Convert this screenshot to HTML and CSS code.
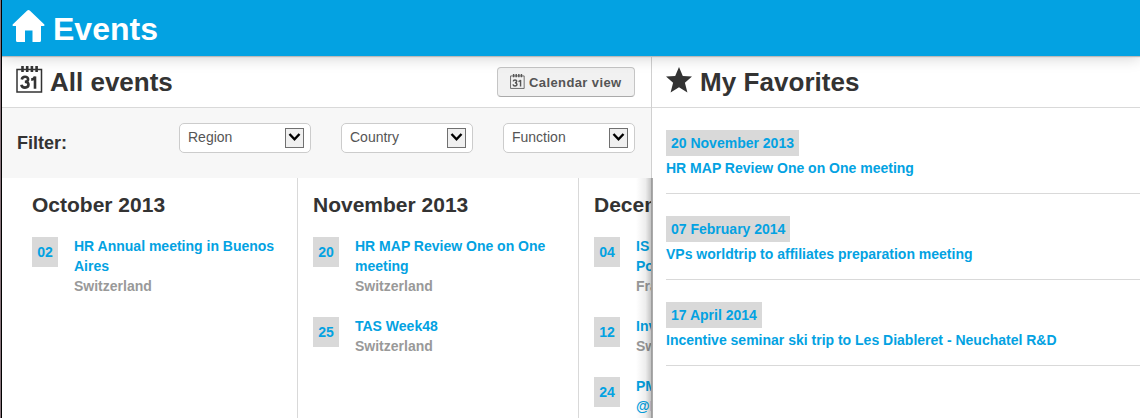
FILE: index.html
```html
<!DOCTYPE html>
<html lang="en">
<head>
<meta charset="utf-8">
<title>Events</title>
<link rel="stylesheet" href="styles.css">
</head>
<body>
<svg class="defs" aria-hidden="true">
  <symbol id="calendar" viewBox="0 0 27 27">
    <path d="M1 3.5H25.5V26H1Z" fill="none" stroke="currentColor" stroke-width="1.5"/>
    <path d="M6.5 0V6M11.2 0V6M15.9 0V6M20.6 0V6" stroke="currentColor" stroke-width="2.6"/>
    <path d="M5.8 13.4C6.2 11.3 7.5 10.8 9 10.8C11 10.8 12.1 11.8 12.1 13.2C12.1 14.8 10.9 15.7 8.9 15.8C11.3 15.9 12.5 17 12.5 18.6C12.5 20.5 11 21.6 9 21.6C7 21.6 5.7 20.6 5.4 18.7M15.2 13.6C17.3 13.4 18.6 12.4 19 10.6V22.7" fill="none" stroke="currentColor" stroke-width="2.6"/>
  </symbol>
  <symbol id="chevron" viewBox="0 0 17 18">
    <path d="M3.5 5L8.5 10.3L13.5 5" fill="none" stroke="#000" stroke-width="2.4"/>
  </symbol>
</svg>
<div class="app">
  <header class="topbar">
    <svg class="home" viewBox="0 0 33 33"><path d="M16.5 0Q17.3 0 18 .7L32.1 14.3Q33.2 16 31.5 16H29V30.5Q29 32 27.5 32H20.5V20.5H13V32H5.5Q4 32 4 30.5V16H1.5Q-.2 16 .9 14.3L15 .7Q15.7 0 16.5 0Z" fill="#fff"/></svg>
    <h1 class="app-title">Events</h1>
  </header>
  <div class="content">
    <main class="events">
      <div class="section-head">
        <svg class="head-icon"><use href="#calendar"/></svg>
        <h2 class="section-title">All events</h2>
        <button class="view-button"><svg class="button-icon"><use href="#calendar"/></svg><span>Calendar view</span></button>
      </div>
      <div class="filters">
        <span class="filter-label">Filter:</span>
        <div class="select"><span>Region</span><svg class="arrow"><use href="#chevron"/></svg></div>
        <div class="select"><span>Country</span><svg class="arrow"><use href="#chevron"/></svg></div>
        <div class="select"><span>Function</span><svg class="arrow"><use href="#chevron"/></svg></div>
      </div>
      <div class="months">
        <section class="month">
          <h3 class="month-title">October 2013</h3>
          <div class="event"><span class="day">02</span><div class="info"><a class="link">HR Annual meeting in Buenos<br>Aires</a><span class="place">Switzerland</span></div></div>
        </section>
        <section class="month">
          <h3 class="month-title">November 2013</h3>
          <div class="event"><span class="day">20</span><div class="info"><a class="link">HR MAP Review One on One<br>meeting</a><span class="place">Switzerland</span></div></div>
          <div class="event"><span class="day">25</span><div class="info"><a class="link">TAS Week48</a><span class="place">Switzerland</span></div></div>
        </section>
        <section class="month">
          <h3 class="month-title">Decem</h3>
          <div class="event"><span class="day">04</span><div class="info"><a class="link">IS<br>Po</a><span class="place">Fra</span></div></div>
          <div class="event"><span class="day">12</span><div class="info"><a class="link">Inv</a><span class="place">Sw</span></div></div>
          <div class="event"><span class="day">24</span><div class="info"><a class="link">PM<br>@I</a></div></div>
        </section>
      </div>
    </main>
    <aside class="favorites">
      <div class="section-head">
        <svg class="star" viewBox="0 0 26 26"><path d="M13 0L16.8 9L26 9.5L18.9 15.7L21.4 25.5L13 20.2L4.6 25.5L7.1 15.7L0 9.5L9.2 9Z" fill="#333"/></svg>
        <h2 class="section-title">My Favorites</h2>
      </div>
      <div class="favorite-list">
        <div class="favorite"><span class="date">20 November 2013</span><a class="link">HR MAP Review One on One meeting</a></div>
        <div class="favorite"><span class="date">07 February 2014</span><a class="link">VPs worldtrip to affiliates preparation meeting</a></div>
        <div class="favorite"><span class="date">17 April 2014</span><a class="link">Incentive seminar ski trip to Les Diableret - Neuchatel R&amp;D</a></div>
      </div>
    </aside>
  </div>
</div>
</body>
</html>
```
FILE: styles.css
```css
* { box-sizing: border-box; }
body {
  margin: 0;
  height: 418px;
  overflow: hidden;
  font-family: "Liberation Sans", Arial, sans-serif;
  font-weight: bold;
  font-size: 14px;
  line-height: 20px;
  color: #333;
  background: #fff;
}
h1, h2, h3 { margin: 0; }
.defs { position: absolute; width: 0; height: 0; }
.app {
  height: 418px;
  display: flex;
  flex-direction: column;
  border-left: 1px solid #88747c;
  box-shadow: inset 1px 0 #000;
  padding-left: 1px;
}
.topbar {
  flex: none;
  height: 56px;
  display: flex;
  align-items: flex-start;
  padding: 10px 0 0 10px;
  background: #03a2e2;
  box-shadow: 0 1px 1px #bbb, 0 2px 14px rgba(0, 0, 0, .18);
  clip-path: inset(0 0 -20px 0);
  z-index: 5;
}
.home { width: 33px; height: 33px; margin-right: 8px; }
.app-title { font-size: 32px; line-height: 38px; color: #fff; }
.content { flex: 1; display: flex; min-height: 0; }
.events { width: 650px; flex: none; display: flex; flex-direction: column; overflow: hidden; }
.section-head {
  flex: none;
  height: 52px;
  display: flex;
  align-items: flex-start;
  padding: 10px 17px 0 14px;
  border-bottom: 1px solid #d9d9d9;
}
.head-icon { width: 27px; height: 27px; margin-right: 7px; }
.section-title { font-size: 26px; line-height: 32px; }
.view-button {
  display: flex;
  align-items: center;
  width: 138px;
  height: 30px;
  margin: 1px 0 0 auto;
  padding: 2px 0 0 12px;
  border: 1px solid #c5c5c5;
  border-bottom-color: #aaa;
  border-radius: 4px;
  background: #f1f1f1;
  color: #555;
  font: bold 13px/18px "Liberation Sans", Arial, sans-serif;
  letter-spacing: .4px;
  white-space: nowrap;
}
.button-icon { width: 15px; height: 15px; margin: -4px 4px 0 0; }
.filters {
  flex: none;
  height: 70px;
  display: flex;
  gap: 30px;
  padding: 15px 17px 0 15px;
  background: #f7f7f7;
}
.filter-label { font-size: 18px; line-height: 40px; margin-right: auto; }
.select {
  width: 132px;
  height: 30px;
  display: flex;
  justify-content: space-between;
  padding: 4px 6px 0 8px;
  border: 1px solid #ccc;
  border-radius: 5px;
  background: #fff;
  color: #555;
  font-weight: normal;
  line-height: 19px;
}
.arrow { width: 19px; height: 20px; border: 1px solid #707070; background: #f0f0f0; }
.months { flex: 1; display: flex; min-height: 0; padding-left: 15px; }
.month { width: 281px; flex: none; padding: 15px 0 0 15px; border-right: 1px solid #d9d9d9; }
.month-title { font-size: 21px; line-height: 24px; margin-bottom: 19px; }
.event { display: flex; align-items: flex-start; gap: 16px; margin-bottom: 20px; }
.day { width: 26px; height: 30px; background: #d9d9d9; color: #03a2e2; text-align: center; line-height: 31px; margin-top: 1px; }
.info { display: flex; flex-direction: column; white-space: nowrap; }
.link { color: #03a2e2; }
.place { color: #999; }
.favorites {
  flex: 1;
  min-width: 0;
  position: relative;
  background: #fff;
  box-shadow: -1px 0 #d0d0d0;
}
.favorites .section-title { letter-spacing: .05px; }
.favorites::before {
  content: "";
  position: absolute;
  left: -16px;
  top: 122px;
  width: 16px;
  bottom: 0;
  border-right: 1px solid #aaa;
  background: linear-gradient(to right, transparent, rgba(0, 0, 0, .07) 60%, rgba(0, 0, 0, .26));
}
.star { width: 26px; height: 26px; margin: 1px 8px 0 0; }
.favorite-list { padding: 22px 0 0 14px; }
.favorite {
  height: 64px;
  margin-bottom: 22px;
  display: flex;
  flex-direction: column;
  align-items: flex-start;
  border-bottom: 1px solid #d9d9d9;
}
.date { height: 26px; padding: 0 5px; margin-bottom: 2px; line-height: 27px; background: #d9d9d9; color: #03a2e2; }
```
